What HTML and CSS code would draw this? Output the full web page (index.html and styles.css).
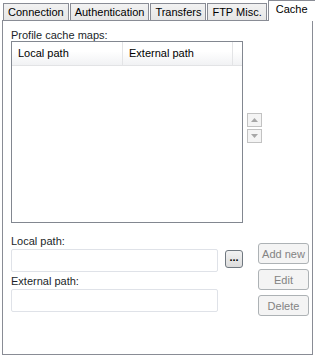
FILE: index.html
```html
<!DOCTYPE html>
<html lang="en">
<head>
  <meta charset="UTF-8">
  <title>Site settings - Cache</title>
  <link rel="stylesheet" href="styles.css">
</head>
<body>
  <div class="tabs">
    <div class="tab">Connection</div>
    <div class="tab">Authentication</div>
    <div class="tab">Transfers</div>
    <div class="tab">FTP Misc.</div>
    <div class="tab active">Cache</div>
  </div>

  <div class="panel">
    <div class="label">Profile cache maps:</div>

    <div class="list-row">
      <div class="list">
        <div class="list-header">
          <div class="col col-local">Local path</div>
          <div class="col col-external">External path</div>
          <div class="col col-fill"></div>
        </div>
      </div>
      <div class="spin">
        <button class="spin-btn" disabled>
          <svg width="7" height="4" viewBox="0 0 7 4"><path d="M3.5 0 L7 4 L0 4 Z" fill="#a7a7a7"/></svg>
        </button>
        <button class="spin-btn" disabled>
          <svg width="7" height="4" viewBox="0 0 7 4"><path d="M0 0 L7 0 L3.5 4 Z" fill="#a7a7a7"/></svg>
        </button>
      </div>
    </div>

    <div class="edit-area">
      <div class="fields">
        <div class="label">Local path:</div>
        <div class="field-row">
          <input class="field" type="text">
          <button class="browse">...</button>
        </div>
        <div class="label label-ext">External path:</div>
        <div class="field-row">
          <input class="field" type="text">
        </div>
      </div>
      <div class="actions">
        <button class="btn" disabled>Add new</button>
        <button class="btn" disabled>Edit</button>
        <button class="btn" disabled>Delete</button>
      </div>
    </div>
  </div>
</body>
</html>
```

FILE: styles.css
```css
body {
  margin: 0;
  background: #fff;
  font-family: "Liberation Sans", Arial, sans-serif;
  font-size: 11px;
  color: #000;
  width: 315px;
  height: 357px;
  overflow: hidden;
}

/* tabs */
.tabs {
  display: flex;
  align-items: flex-end;
  height: 20px;
  padding-left: 3px;
  position: relative;
  z-index: 1;
}

.tab {
  flex: none;
  white-space: nowrap;
  height: 16px;
  line-height: 17px;
  padding: 0 4px;
  margin-right: 1px;
  border: 1px solid #898c95;
  border-bottom: none;
  background: linear-gradient(#f2f2f2, #e6e6e6);
  box-sizing: content-box;
}

.tab.active {
  height: 20px;
  line-height: 16px;
  margin-bottom: -1px;
  padding: 0 7px;
  background: #fff;
}

/* panel */
.panel {
  margin: 0 2px;
  border: 1px solid #898c95;
  padding: 9px 0 0 8px;
  box-sizing: border-box;
  width: 311px;
  height: 335px;
}

.label {
  color: #1b1f2a;
  line-height: 11px;
  height: 11px;
}

.list-row {
  display: flex;
  align-items: center;
}

.list {
  width: 232px;
  height: 182px;
  border: 1px solid #828790;
  box-sizing: border-box;
  background: #fff;
}

.list-header {
  display: flex;
  height: 23px;
  background: linear-gradient(#fff 0%, #fff 40%, #f1f2f4 100%);
  border-bottom: 1px solid #e2e3e5;
}

.col {
  line-height: 23px;
  padding-left: 6px;
  border-right: 1px solid #e3e4e6;
  box-sizing: border-box;
}

.col-local {
  width: 111px;
}

.col-external {
  width: 110px;
}

.col-fill {
  flex: 1;
  border-right: none;
}

.spin {
  display: flex;
  flex-direction: column;
  gap: 2px;
  margin-left: 4px;
  margin-top: -8px;
}

.spin-btn {
  width: 15px;
  height: 14px;
  padding: 0;
  border: 1px solid #c2c2c2;
  background: #f4f4f4;
  display: flex;
  align-items: center;
  justify-content: center;
}

/* bottom edit area */
.edit-area {
  display: flex;
  margin-top: 13px;
}

.fields {
  width: 207px;
}

.field-row {
  display: flex;
  align-items: flex-start;
  margin-top: 2px;
}

.field {
  width: 207px;
  height: 23px;
  flex: none;
  box-sizing: border-box;
  border: 1px solid #dfe2e8;
  border-radius: 2px;
  background: #fff;
  margin: 0;
}

.label-ext {
  margin-top: 4px;
}

.browse {
  flex: none;
  width: 18px;
  height: 18px;
  margin: 1px 0 0 7px;
  padding: 0 0 4px;
  border: 1px solid #707880;
  border-radius: 3px;
  background: linear-gradient(#f2f2f2, #dcdcdc);
  font-family: "Liberation Sans", Arial, sans-serif;
  font-size: 11px;
  font-weight: bold;
  line-height: 10px;
  color: #000;
}

.actions {
  display: flex;
  flex-direction: column;
  gap: 5px;
  margin-left: 40px;
  margin-top: 7px;
}

.btn {
  width: 51px;
  height: 21px;
  padding: 0;
  border: 1px solid #adb2b5;
  border-radius: 3px;
  background: #f4f4f4;
  font-family: "Liberation Sans", Arial, sans-serif;
  font-size: 11px;
  color: #838383;
}
```
